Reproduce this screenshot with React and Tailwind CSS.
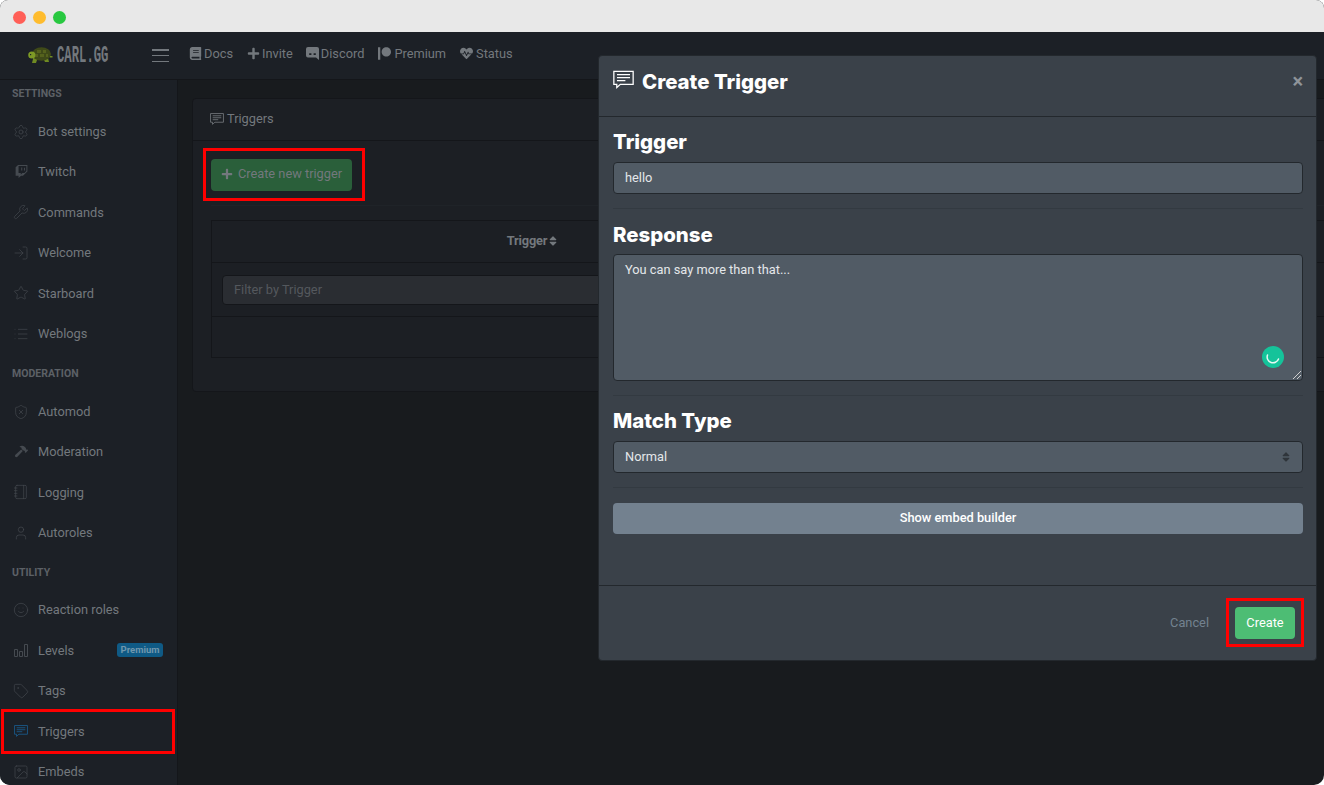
import {
  Image,
  List,
  LogIn,
  Notebook,
  Settings,
  ShieldX,
  Smile,
  Star,
  Tag,
  User,
  Wrench,
} from "lucide-react";
import { FaBook, FaHammer, FaHeartbeat, FaPatreon, FaPlus, FaSort, FaTwitch } from "react-icons/fa";

function CommentIcon({ size = 16, className = "" }) {
  return (
    <svg
      width={size}
      height={size}
      viewBox="0 0 20 20"
      fill="none"
      stroke="currentColor"
      strokeWidth="1.2"
      className={className}
    >
      <path d="M0.8 2.2h18.4v12.4H7l-3.4 3v-3H0.8z" />
      <path d="M3.8 5.4h12.4M3.8 8.2h12.4M3.8 11h8" />
    </svg>
  );
}

function LevelsIcon({ size = 16, className = "" }) {
  return (
    <svg width={size} height={size} viewBox="0 0 14 14" fill="none" stroke="currentColor" strokeWidth="1" className={className}>
      <path d="M0.5 6.5h3v7h-3zM5.5 8.5h3v5h-3zM10.5 1.5h3v12h-3z" />
    </svg>
  );
}

// older square discord mark, not in the icon packages
function DiscordIcon({ size = 13 }) {
  return (
    <svg width={size} height={size} viewBox="0 0 13 13">
      <path fill="currentColor" d="M2 0h9a2 2 0 0 1 2 2v11l-3-2.4H2a2 2 0 0 1-2-2V2a2 2 0 0 1 2-2z" />
      <path fill="#1c2026" d="M3.2 6.2h2.2v1.8H3.2zM7.6 6.2h2.2v1.8H7.6z" />
    </svg>
  );
}

const sections = [
  {
    title: "SETTINGS",
    spacing: "pt-[7px] pb-[10.4px]",
    items: [
      { name: "Bot settings", icon: Settings },
      { name: "Twitch", icon: FaTwitch, solid: true },
      { name: "Commands", icon: Wrench },
      { name: "Welcome", icon: LogIn },
      { name: "Starboard", icon: Star },
      { name: "Weblogs", icon: List },
    ],
  },
  {
    title: "MODERATION",
    spacing: "pt-[13px] pb-[10.6px]",
    items: [
      { name: "Automod", icon: ShieldX },
      { name: "Moderation", icon: FaHammer, solid: true },
      { name: "Logging", icon: Notebook },
      { name: "Autoroles", icon: User },
    ],
  },
  {
    title: "UTILITY",
    spacing: "pt-[13px] pb-[10px]",
    items: [
      { name: "Reaction roles", icon: Smile },
      { name: "Levels", icon: LevelsIcon, small: true, badge: "Premium" },
      { name: "Tags", icon: Tag },
      { name: "Triggers", icon: CommentIcon, small: true, active: true },
      { name: "Embeds", icon: Image },
    ],
  },
];

const navLinks = [
  { name: "Docs", icon: FaBook, size: 13, gap: "gap-[2px]" },
  { name: "Invite", icon: FaPlus, size: 13, gap: "gap-[2px]" },
  { name: "Discord", icon: DiscordIcon, size: 13, gap: "-ml-[1px] gap-[2px]" },
  { name: "Premium", icon: FaPatreon, size: 13, gap: "gap-[3px]" },
  { name: "Status", icon: FaHeartbeat, size: 13, gap: "gap-[3px]" },
];

function Turtle() {
  return (
    <svg width="25" height="17" viewBox="0 0 25 17" className="shrink-0">
      <path fill="#6f8a22" d="M5 11h15l1 4h-4l-1-2H9l-1 3H4l1-4z" />
      <ellipse cx="13.5" cy="7" rx="9.5" ry="6.8" fill="#3f4a18" />
      <path fill="#55621d" d="M9 3h4v3H9zM15 3h3v3h-3zM6 7h4v3H6zM12 7h4v3h-4zM18 7h2v3h-2z" />
      <circle cx="3.8" cy="8" r="3.6" fill="#7d9a25" />
      <path fill="#6f8a22" d="M22 9h2.5v1.5H22z" />
      <rect x="2" y="7" width="1.2" height="1.2" fill="#1c2026" />
    </svg>
  );
}

function SidebarItem({ item }) {
  const Icon = item.icon;
  return (
    <div className="relative flex h-[40.4px] items-center pr-[14px] pl-[13px] text-[12.8px] text-[#73787d]">
      <span className="mr-[9px] flex w-[16px] shrink-0 justify-center">
        <Icon
          size={item.solid ? 13 : item.small ? 14 : 16}
          {...(item.solid || item.small ? {} : { strokeWidth: 1 })}
          className={item.active ? "text-[#1a5d8f]" : "text-[#454a50]"}
        />
      </span>
      <span>{item.name}</span>
      {item.badge && (
        <span className="ml-auto w-[46px] rounded-[3px] bg-[#0f5a85] text-center text-[9.5px] leading-[14px] font-bold text-[#6f97ad]">
          {item.badge}
        </span>
      )}
      {item.active && (
        <div className="absolute top-[-2px] left-[1px] h-[45px] w-[174px] border-[3px] border-[#ff0000]" />
      )}
    </div>
  );
}

function Sidebar() {
  return (
    <aside className="h-full w-[178px] shrink-0 overflow-hidden border-r border-[#14161a] bg-[#1c2026]">
      {sections.map((section) => (
        <div key={section.title}>
          <div className={`pl-[12px] text-[10.5px] leading-[14px] font-bold text-[#5c6166] ${section.spacing}`}>
            {section.title}
          </div>
          {section.items.map((item) => (
            <SidebarItem key={item.name} item={item} />
          ))}
        </div>
      ))}
    </aside>
  );
}

function Navbar() {
  return (
    <header className="flex h-[48px] shrink-0 items-center border-b border-[#14161a] bg-[#1c2026]">
      <div className="flex w-[150px] items-center pl-[28px]">
        <Turtle />
        <span className="ml-[4px] inline-block w-[52px] origin-left scale-x-[0.51] font-['Liberation_Mono',monospace] text-[24px] leading-[20px] font-bold whitespace-nowrap text-[#73787d]">
          CARL.GG
        </span>
      </div>
      <div className="flex h-[13px] w-[39px] flex-col justify-between">
        <div className="ml-[2px] h-[1.5px] w-[17px] bg-[#73787d]" />
        <div className="ml-[2px] h-[1.5px] w-[17px] bg-[#73787d]" />
        <div className="ml-[2px] h-[1.5px] w-[17px] bg-[#73787d]" />
      </div>
      <nav className="flex items-center gap-[14px] pb-[4px] text-[12.8px] text-[#73787d]">
        {navLinks.map((link) => {
          const Icon = link.icon;
          return (
            <div key={link.name} className={`flex items-center ${link.gap}`}>
              <Icon size={link.size} />
              <span>{link.name}</span>
            </div>
          );
        })}
      </nav>
    </header>
  );
}

function TriggersCard() {
  return (
    <div className="w-[1200px] rounded-[4px] border border-[#14161a] bg-[#1c1f24]">
      <div className="flex h-[42px] items-center gap-[3px] border-b border-[#14161a] pb-[2px] pl-[17px] text-[12.8px] text-[#73787d]">
        <CommentIcon size={14} />
        Triggers
      </div>
      <div className="px-[18px] pt-[18px] pb-[33px]">
        <div className="border-b border-[#1f2328] pb-[14px]">
          <div className="relative w-fit">
            <button className="flex h-[32px] w-[141px] items-center justify-center gap-[5px] rounded-[4px] bg-[#2a5f3a] pb-[2px] text-[12.8px] text-[#73787d]">
              <FaPlus size={12} />
              Create new trigger
            </button>
            <div className="absolute top-[-11px] left-[-8px] h-[53px] w-[162px] border-[3px] border-[#ff0000]" />
          </div>
        </div>
        <div className="mt-[14px] border border-[#14161a] text-[12.8px]">
          <div className="flex h-[42px] border-b border-[#14161a] font-bold text-[#73787d]">
            <div className="flex w-[642px] items-center justify-center pb-[1px] tracking-[-0.2px]">
              Trigger
              <FaSort size={12} />
            </div>
          </div>
          <div className="flex h-[54px] items-center border-b border-[#14161a] px-[10px]">
            <div className="flex h-[30px] w-[622px] items-center rounded-[4px] border border-[#14161a] bg-[#2a2d32] px-[11px] text-[#54585d]">
              Filter by Trigger
            </div>
          </div>
          <div className="h-[40px]" />
        </div>
      </div>
    </div>
  );
}

function Modal() {
  return (
    <div className="absolute top-[55px] left-[598px] flex h-[606px] w-[719px] flex-col rounded-[4px] border border-[#23282d] bg-[#3a4149] font-['Roboto',sans-serif]">
      <div className="flex h-[61px] shrink-0 items-center justify-between border-b border-[#23282d] pr-[13px] pb-[8px] pl-[14px]">
        <div className="flex items-center gap-[8px]">
          <CommentIcon size={21} className="mb-[4px] text-white" />
          <h2 className="font-['Inter',sans-serif] text-[20.4px] font-extrabold text-white">Create Trigger</h2>
        </div>
        <span className="pb-[2px] text-[20px] leading-none font-bold text-[#8f9499]">×</span>
      </div>
      <div className="flex flex-1 flex-col pt-[10px] pr-[13px] pl-[14px]">
        <h3 className="font-['Inter',sans-serif] text-[20.4px] leading-[30px] font-extrabold text-white">Trigger</h3>
        <div className="mt-[5px] flex h-[32px] items-center rounded-[4px] border border-[#23282d] bg-[#515b65] px-[11px] text-[12.8px] text-[#e4e7ea]">
          hello
        </div>
        <div className="mt-[14px] border-t border-[#333a41]" />
        <h3 className="mt-[11px] font-['Inter',sans-serif] text-[20.4px] leading-[30px] font-extrabold text-white">Response</h3>
        <div className="relative mt-[4px] h-[127px] rounded-[4px] border border-[#23282d] bg-[#515b65] px-[11px] py-[5px] text-[12.8px] text-[#e4e7ea]">
          You can say more than that...
          <div className="absolute right-[18px] bottom-[12px] flex h-[22px] w-[22px] items-center justify-center rounded-full bg-[#15c39a]">
            <svg width="14" height="14" viewBox="0 0 14 14" fill="none">
              <path d="M1.5 5A5.8 5.8 0 0 0 12.5 9" stroke="#e6f9f3" strokeWidth="1.5" strokeLinecap="round" />
            </svg>
          </div>
          <svg className="absolute right-[1px] bottom-[1px]" width="9" height="9" viewBox="0 0 9 9" stroke="#d0d0d0" strokeWidth="1">
            <path d="M1 9l8-8M5 9l4-4" />
          </svg>
        </div>
        <div className="mt-[14px] border-t border-[#333a41]" />
        <h3 className="mt-[10px] font-['Inter',sans-serif] text-[20.4px] leading-[30px] font-extrabold text-white">Match Type</h3>
        <div className="mt-[5px] flex h-[32px] items-center justify-between rounded-[4px] border border-[#23282d] bg-[#515b65] pr-[10px] pl-[11px] text-[12.8px] text-[#e4e7ea]">
          Normal
          <FaSort size={12} className="text-[#2f353b]" />
        </div>
        <div className="mt-[14px] border-t border-[#333a41]" />
        <button className="mt-[15px] h-[31px] rounded-[4px] bg-[#73818f] pb-[1px] text-[12.8px] font-medium text-white">
          Show embed builder
        </button>
      </div>
      <div className="flex h-[75px] shrink-0 items-center justify-end gap-[26px] border-t border-[#23282d] pr-[21px] text-[12.8px]">
        <span className="text-[#73818f]">Cancel</span>
        <div className="relative">
          <button className="h-[32px] w-[60px] rounded-[4px] bg-[#4dbd74] text-white">Create</button>
          <div className="absolute top-[-9px] left-[-9px] h-[49px] w-[78px] border-[3px] border-[#ff0000]" />
        </div>
      </div>
    </div>
  );
}

export default function App() {
  return (
    <div className="h-[785px] w-[1324px] overflow-hidden bg-white font-['Roboto',sans-serif]">
      <div className="relative flex h-full flex-col overflow-hidden rounded-t-[8px] rounded-b-[10px] bg-[#181b1e]">
        <div className="flex h-[32px] shrink-0 items-center gap-[7px] bg-[#e8e8e8] pt-[2px] pl-[13px]">
          <div className="h-[13px] w-[13px] rounded-full bg-[#ff5f57]" />
          <div className="h-[13px] w-[13px] rounded-full bg-[#febc2e]" />
          <div className="h-[13px] w-[13px] rounded-full bg-[#28c840]" />
        </div>
        <Navbar />
        <div className="flex min-h-0 flex-1">
          <Sidebar />
          <main className="min-w-0 flex-1 overflow-hidden pt-[18px] pl-[14px]">
            <TriggersCard />
          </main>
        </div>
        <Modal />
      </div>
    </div>
  );
}
